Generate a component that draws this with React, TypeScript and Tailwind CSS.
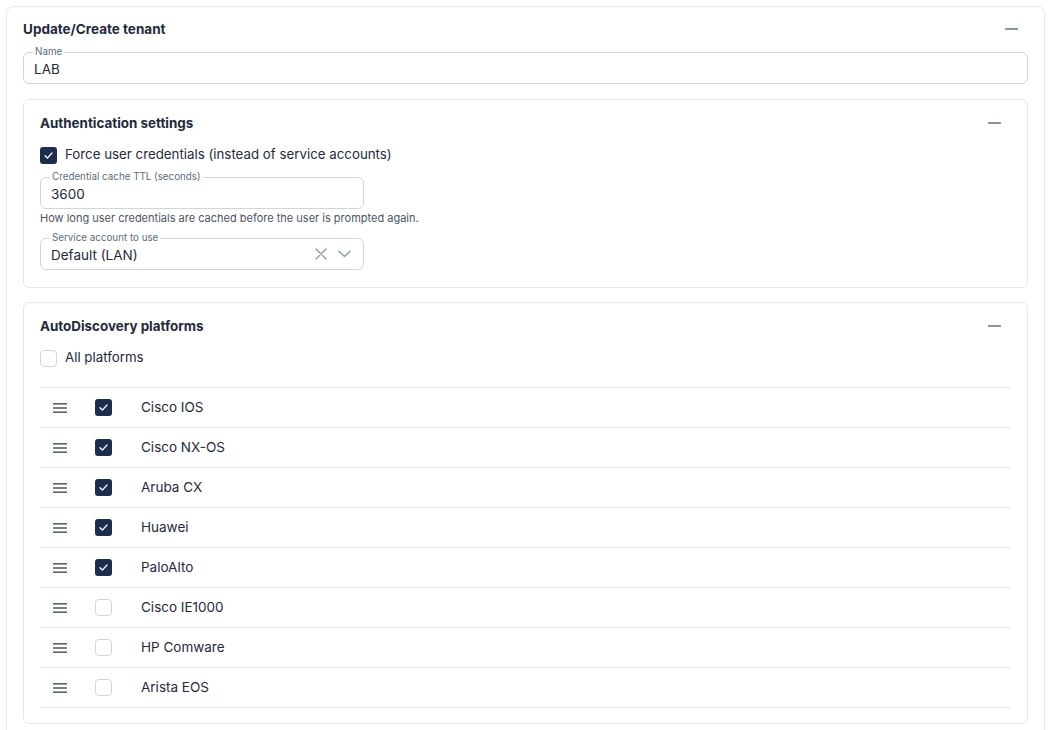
import React from 'react';

const PLATFORMS = [
  { name: 'Cisco IOS', checked: true },
  { name: 'Cisco NX-OS', checked: true },
  { name: 'Aruba CX', checked: true },
  { name: 'Huawei', checked: true },
  { name: 'PaloAlto', checked: true },
  { name: 'Cisco IE1000', checked: false },
  { name: 'HP Comware', checked: false },
  { name: 'Arista EOS', checked: false },
];

function Checkbox({ checked }: { checked: boolean }) {
  if (checked) {
    return (
      <div className="w-[17px] h-[17px] rounded-[3px] bg-[#1d2d4e] flex items-center justify-center shrink-0">
        <svg width="11" height="11" viewBox="0 0 12 12" fill="none">
          <path d="M2.2 6.3 L4.8 8.8 L9.8 3.3" stroke="white" strokeWidth="1.4" strokeLinecap="round" strokeLinejoin="round" />
        </svg>
      </div>
    );
  }
  return <div className="w-[17px] h-[17px] rounded-[4px] border border-[#cfd6df] bg-white shrink-0" />;
}

function Minus() {
  return <div className="w-[13px] h-[2px] bg-[#8a94a3] mr-[10px]" />;
}

function Field({
  label,
  value,
  className,
  children,
}: {
  label: string;
  value: string;
  className?: string;
  children?: React.ReactNode;
}) {
  return (
    <div className={`relative h-[32px] rounded-[6px] border border-[#cdd6e1] flex items-center pl-[10px] pr-[12px] ${className ?? ''}`}>
      <span className="absolute -top-[7px] left-[9px] px-[2px] bg-white text-[9.8px] leading-[12px] text-[#5f6b7a]">{label}</span>
      <span className="text-[13.5px] text-[#1f2a3c] flex-1 pt-[2px]">{value}</span>
      {children}
    </div>
  );
}

function Hamburger() {
  return (
    <svg width="14" height="10" viewBox="0 0 14 10" className="shrink-0">
      <rect x="0" y="0" width="14" height="1.6" fill="#5b6472" />
      <rect x="0" y="4.2" width="14" height="1.6" fill="#5b6472" />
      <rect x="0" y="8.4" width="14" height="1.6" fill="#5b6472" />
    </svg>
  );
}

export default function App() {
  return (
    <div className="min-h-[730px] bg-white pt-[6px] pl-[6px] font-['Inter','Noto_Sans',sans-serif] text-[#1f2a3c]">
      <div className="w-[1039px] h-[740px] border border-[#e3e8ee] rounded-[8px] px-4 pt-[12px]">
        {/* Header */}
        <div className="h-[20px] flex items-center justify-between">
          <span className="text-[13.5px] font-bold">Update/Create tenant</span>
          <Minus />
        </div>

        <Field label="Name" value="LAB" className="mt-[13px]" />

        {/* Authentication settings */}
        <div className="mt-[15px] border border-[#e3e8ee] rounded-[6px] px-4 pt-[13px] pb-[17px]">
          <div className="h-[20px] flex items-center justify-between">
            <span className="text-[13.4px] font-bold">Authentication settings</span>
            <Minus />
          </div>
          <div className="mt-[12px] h-[20px] flex items-center gap-2">
            <Checkbox checked />
            <span className="text-[13.3px]">Force user credentials (instead of service accounts)</span>
          </div>
          <Field label="Credential cache TTL (seconds)" value="3600" className="mt-[12px] w-[324px]" />
          <div className="mt-[2px] text-[11px] leading-[14px] text-[#4b5563]">
            How long user credentials are cached before the user is prompted again.
          </div>
          <Field label="Service account to use" value="Default (LAN)" className="mt-[13px] w-[324px]">
            <div className="flex items-center gap-[11px] text-[#8a94a3]">
              <svg width="12" height="12" viewBox="0 0 12 12" fill="none">
                <path d="M1 1 L11 11 M11 1 L1 11" stroke="currentColor" strokeWidth="1.3" strokeLinecap="round" />
              </svg>
              <svg width="13" height="8" viewBox="0 0 13 8" fill="none">
                <path d="M1 1.2 L6.5 6.5 L12 1.2" stroke="currentColor" strokeWidth="1.3" strokeLinecap="round" strokeLinejoin="round" />
              </svg>
            </div>
          </Field>
        </div>

        {/* AutoDiscovery platforms */}
        <div className="mt-[14px] border border-[#e3e8ee] rounded-[6px] px-4 pt-[13px] pb-[15px]">
          <div className="h-[20px] flex items-center justify-between">
            <span className="text-[13.4px] font-bold">AutoDiscovery platforms</span>
            <Minus />
          </div>
          <div className="mt-[12px] h-[20px] flex items-center gap-2">
            <Checkbox checked={false} />
            <span className="text-[13.3px]">All platforms</span>
          </div>
          <div className="mt-[19px] border-b border-[#e3e8ee]">
            {PLATFORMS.map((p) => (
              <div key={p.name} className="h-[40px] border-t border-[#e3e8ee] flex items-center pl-[13px]">
                <Hamburger />
                <div className="ml-[28px]">
                  <Checkbox checked={p.checked} />
                </div>
                <span className="ml-[29px] text-[13.5px]">{p.name}</span>
              </div>
            ))}
          </div>
        </div>
      </div>
    </div>
  );
}
